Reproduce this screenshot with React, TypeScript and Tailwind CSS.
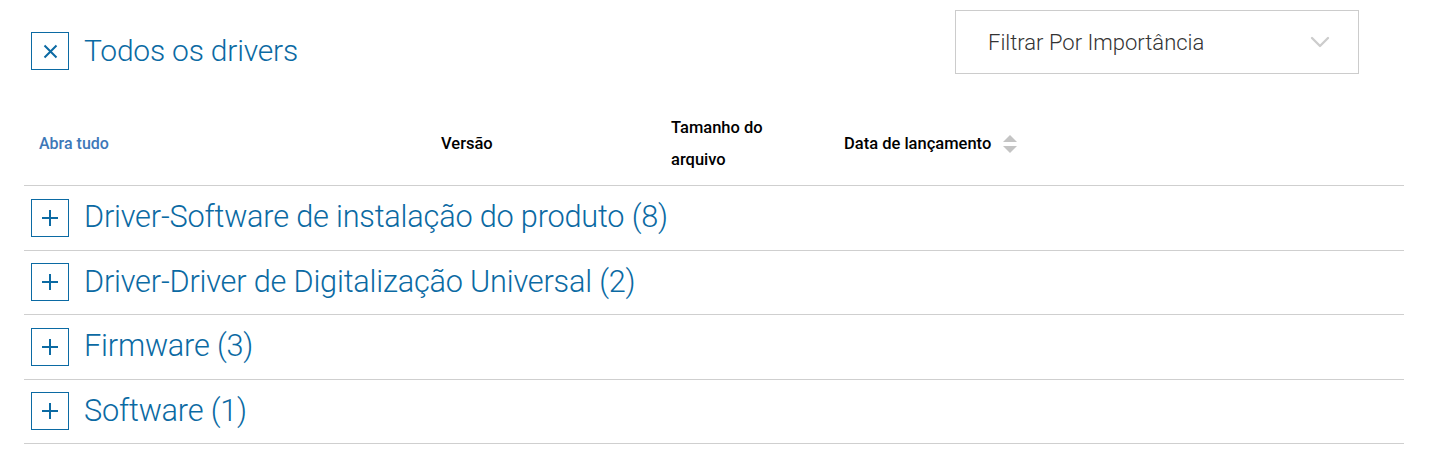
import { ChevronDown } from "lucide-react";

const groups = [
  "Driver-Software de instalação do produto (8)",
  "Driver-Driver de Digitalização Universal (2)",
  "Firmware (3)",
  "Software (1)",
];

function IconBox({ kind }: { kind: "plus" | "close" }) {
  return (
    <span className="flex h-[38px] w-[38px] shrink-0 items-center justify-center border border-[#0b6aa3]">
      {kind === "plus" ? (
        <svg width="18" height="18" viewBox="0 0 18 18">
          <path d="M9 1v16M1 9h16" stroke="#0b6aa3" strokeWidth="2" />
        </svg>
      ) : (
        <svg width="15" height="15" viewBox="0 0 15 15">
          <path d="M1.5 1.5l12 12M13.5 1.5l-12 12" stroke="#0b6aa3" strokeWidth="2" />
        </svg>
      )}
    </span>
  );
}

export default function App() {
  return (
    <div className="min-h-[469px] bg-white pl-6 pr-12 font-['Roboto',sans-serif]">
      <div className="flex items-start justify-between">
        <div className="flex items-center gap-[15px] pl-[7px] pt-[32px]">
          <IconBox kind="close" />
          <h2 className="text-[30px] font-light leading-none tracking-[-0.2px] text-[#0b6aa3]">Todos os drivers</h2>
        </div>
        <button className="mr-[45px] mt-[10px] flex h-[64px] w-[404px] items-center justify-between border border-[#cccccc] pl-[32px] pr-[22px] text-left">
          <span className="text-[22px] font-light text-[#333333]">Filtrar Por Importância</span>
          <ChevronDown className="h-8 w-8 text-[#cccccc]" strokeWidth={1.75} />
        </button>
      </div>

      <div className="mt-[29px] grid h-[83px] grid-cols-[417px_230px_173px_1fr] items-center border-b border-[#cfcfcf] text-[16.5px] font-medium">
        <button className="pl-[15px] text-left text-[16px] text-[#3d78b8]">Abra tudo</button>
        <span className="text-black">Versão</span>
        <span className="w-[105px] leading-[32px] text-black">Tamanho do arquivo</span>
        <span className="flex items-center gap-[12px] text-black">
          Data de lançamento
          <svg width="14" height="18" viewBox="0 0 14 18">
            <path d="M7 0L14 7H0z" fill="#c4c4c4" />
            <path d="M0 11H14L7 18z" fill="#c4c4c4" />
          </svg>
        </span>
      </div>

      {groups.map((name) => (
        <div key={name} className="flex h-[64.5px] items-center gap-[15px] border-b border-[#cfcfcf] pl-[7px]">
          <IconBox kind="plus" />
          <span className="text-[30.7px] font-light leading-none tracking-[-0.2px] text-[#0b6aa3]">{name}</span>
        </div>
      ))}
    </div>
  );
}
